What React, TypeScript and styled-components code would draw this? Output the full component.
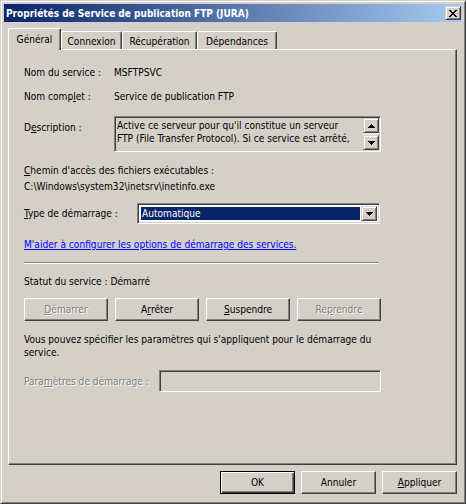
import React from 'react';
import styled, { createGlobalStyle, css } from 'styled-components';

const FACE = '#d4d0c8';
const FONT = `"DejaVu Sans Condensed", "Liberation Sans", sans-serif`;

const Global = createGlobalStyle`
  html, body { margin: 0; padding: 0; background: ${FACE}; }
  body { font-family: ${FONT}; font-size: 10.1px; line-height: 13px; color: #000; }
  * { box-sizing: border-box; }
`;

const Window = styled.div`
  width: 466px;
  height: 504px;
  background: ${FACE};
  border: 1px solid;
  border-color: ${FACE} #404040 #404040 ${FACE};
  box-shadow: inset 1px 1px #fff, inset -1px -1px #808080;
  padding: 3px;
  display: flex;
  flex-direction: column;
`;

const TitleBar = styled.div`
  height: 18px;
  flex: none;
  background: linear-gradient(to right, #0a246a, #a6caf0);
  display: flex;
  align-items: center;
  justify-content: space-between;
  padding: 0 1px 0 2px;
`;

const TitleText = styled.span`
  color: #fff;
  font-weight: bold;
  font-size: 10px;
  white-space: nowrap;
`;

const raised = css`
  background: ${FACE};
  border: 1px solid;
  border-color: ${FACE} #404040 #404040 ${FACE};
  box-shadow: inset 1px 1px #fff, inset -1px -1px #808080;
`;

const sunken = css`
  border: 1px solid;
  border-color: #808080 #fff #fff #808080;
  box-shadow: inset 1px 1px #404040, inset -1px -1px ${FACE};
`;

const CaptionButton = styled.div`
  ${raised};
  width: 16px;
  height: 14px;
  display: flex;
  align-items: center;
  justify-content: center;
`;

const Body = styled.div`
  flex: 1;
  display: flex;
  flex-direction: column;
  padding: 6px 5px 6px 4px;
`;

const TabStrip = styled.div`
  height: 21px;
  display: flex;
  align-items: flex-end;
  position: relative;
  z-index: 2;
`;

const Tab = styled.div<{ $active?: boolean; $w: number }>`
  width: ${(p) => p.$w}px;
  height: ${(p) => (p.$active ? 22 : 18)}px;
  margin-bottom: ${(p) => (p.$active ? -1 : 0)}px;
  background: ${FACE};
  border-top: 1px solid #fff;
  border-left: 1px solid #fff;
  border-right: 1px solid #404040;
  border-radius: 2px 2px 0 0;
  box-shadow: inset -1px 0 #808080;
  display: flex;
  justify-content: center;
  padding-top: ${(p) => (p.$active ? 4 : 3)}px;
  white-space: nowrap;
`;

const Panel = styled.div`
  flex: 1;
  border: 1px solid;
  border-color: #fff #404040 #404040 #fff;
  box-shadow: inset -1px -1px #808080;
  padding: 0 0 0 15px;
  display: flex;
  flex-direction: column;
`;

const Row = styled.div<{ $mt: number; $align?: string }>`
  display: flex;
  align-items: ${(p) => p.$align || 'center'};
  margin-top: ${(p) => p.$mt}px;
  white-space: nowrap;
`;

const Label = styled.div<{ $w: number; $pt?: number; $disabled?: boolean }>`
  width: ${(p) => p.$w}px;
  flex: none;
  padding-top: ${(p) => p.$pt || 0}px;
  ${(p) =>
    p.$disabled &&
    css`
      color: #808080;
      text-shadow: 1px 1px #fff;
    `}
`;

const Line = styled.div<{ $mt: number }>`
  margin-top: ${(p) => p.$mt}px;
  white-space: nowrap;
`;

const DescBox = styled.div`
  ${sunken};
  width: 267px;
  height: 36px;
  display: flex;
  background: ${FACE};
`;

const DescText = styled.div`
  flex: 1;
  padding: 2px 1px 0 2px;
  overflow: hidden;
  white-space: nowrap;
`;

const ScrollBar = styled.div`
  width: 16px;
  display: flex;
  flex-direction: column;
  margin: 1px 1px 1px 0;
`;

const ScrollButton = styled.div`
  ${raised};
  height: 15px;
  display: flex;
  align-items: center;
  justify-content: center;
`;

const ScrollTrack = styled.div`
  flex: 1;
  background-image: repeating-conic-gradient(#fff 0 25%, ${FACE} 0 50%);
  background-size: 2px 2px;
`;

const Combo = styled.div`
  ${sunken};
  width: 243px;
  height: 21px;
  background: #fff;
  display: flex;
  padding: 2px;
`;

const ComboValue = styled.div`
  flex: 1;
  background: #0a246a;
  color: #fff;
  padding-left: 1px;
  display: flex;
  align-items: center;
  margin: 1px;
`;

const ComboButton = styled.div`
  ${raised};
  width: 16px;
  display: flex;
  align-items: center;
  justify-content: center;
`;

const Link = styled.a`
  color: #0000ff;
  text-decoration: underline;
  cursor: pointer;
`;

const Separator = styled.div<{ $mt: number }>`
  width: 354px;
  height: 2px;
  margin-top: ${(p) => p.$mt}px;
  border-top: 1px solid #808080;
  border-bottom: 1px solid #fff;
`;

const ButtonRow = styled.div<{ $mt: number }>`
  width: 357px;
  display: flex;
  justify-content: space-between;
  margin-top: ${(p) => p.$mt}px;
`;

const Button = styled.div<{ $w: number; $disabled?: boolean; $default?: boolean }>`
  width: ${(p) => p.$w}px;
  height: 23px;
  background: ${FACE};
  border: 1px solid;
  border-color: #fff #404040 #404040 #fff;
  box-shadow: inset -1px -1px #808080;
  display: flex;
  align-items: center;
  justify-content: center;
  white-space: nowrap;
  ${(p) =>
    p.$disabled &&
    css`
      color: #808080;
      text-shadow: 1px 1px #fff;
    `}
  ${(p) =>
    p.$default &&
    css`
      border-color: #000;
      box-shadow: inset 1px 1px #fff, inset -1px -1px #404040, inset -2px -2px #808080;
    `}
`;

const Input = styled.div`
  ${sunken};
  width: 222px;
  height: 22px;
  background: ${FACE};
`;

const DialogButtons = styled.div`
  display: flex;
  justify-content: flex-end;
  gap: 6px;
  margin-top: 6px;
`;

const Arrow = ({ dir }: { dir: 'up' | 'down' }) => (
  <svg width="7" height="4" viewBox="0 0 7 4" shapeRendering="crispEdges">
    {dir === 'up' ? (
      <path d="M3 0h1v1h1v1h1v1h1v1H0V3h1V2h1V1h1z" fill="#000" />
    ) : (
      <path d="M0 0h7v1H6v1H5v1H4v1H3V3H2V2H1V1H0z" fill="#000" />
    )}
  </svg>
);

const CloseGlyph = () => (
  <svg width="8" height="7" viewBox="0 0 8 7" shapeRendering="crispEdges">
    <path
      fill="#000"
      d="M0 0h2v1H0z M6 0h2v1H6z M1 1h2v1H1z M5 1h2v1H5z M2 2h4v1H2z M3 3h2v1H3z M2 4h4v1H2z M1 5h2v1H1z M5 5h2v1H5z M0 6h2v1H0z M6 6h2v1H6z"
    />
  </svg>
);

export default function App() {
  return (
    <>
      <Global />
      <Window>
        <TitleBar>
          <TitleText>Propriétés de Service de publication FTP (JURA)</TitleText>
          <CaptionButton>
            <CloseGlyph />
          </CaptionButton>
        </TitleBar>
        <Body>
          <TabStrip>
            <Tab $active $w={53}>Général</Tab>
            <Tab $w={61}>Connexion</Tab>
            <Tab $w={75}>Récupération</Tab>
            <Tab $w={80}>Dépendances</Tab>
          </TabStrip>
          <Panel>
            <Row $mt={16}>
              <Label $w={90}>Nom du service :</Label>
              <span>MSFTPSVC</span>
            </Row>
            <Row $mt={11}>
              <Label $w={90}>
                Nom comp<u>l</u>et :
              </Label>
              <span>Service de publication FTP</span>
            </Row>
            <Row $mt={13} $align="flex-start">
              <Label $w={90} $pt={5}>
                D<u>e</u>scription :
              </Label>
              <DescBox>
                <DescText>
                  Active ce serveur pour qu'il constitue un serveur
                  <br />
                  FTP (File Transfer Protocol). Si ce service est arrêté,
                </DescText>
                <ScrollBar>
                  <ScrollButton>
                    <Arrow dir="up" />
                  </ScrollButton>
                  <ScrollTrack />
                  <ScrollButton>
                    <Arrow dir="down" />
                  </ScrollButton>
                </ScrollBar>
              </DescBox>
            </Row>
            <Line $mt={12}>
              <u>C</u>hemin d'accès des fichiers exécutables :
            </Line>
            <Line $mt={3}>C:\Windows\system32\inetsrv\inetinfo.exe</Line>
            <Row $mt={10}>
              <Label $w={113}>
                <u>T</u>ype de démarrage :
              </Label>
              <Combo>
                <ComboValue>Automatique</ComboValue>
                <ComboButton>
                  <Arrow dir="down" />
                </ComboButton>
              </Combo>
            </Row>
            <Line $mt={14}>
              <Link>M'aider à configurer les options de démarrage des services.</Link>
            </Line>
            <Separator $mt={11} />
            <Line $mt={11}>Statut du service : Démarré</Line>
            <ButtonRow $mt={10}>
              <Button $w={84} $disabled>
                <u>D</u>émarrer
              </Button>
              <Button $w={84}>
                A<u>r</u>rêter
              </Button>
              <Button $w={84}>
                <u>S</u>uspendre
              </Button>
              <Button $w={84} $disabled>
                Re<u>p</u>rendre
              </Button>
            </ButtonRow>
            <Line $mt={12}>
              Vous pouvez spécifier les paramètres qui s'appliquent pour le démarrage du
              <br />
              service.
            </Line>
            <Row $mt={11}>
              <Label $w={135} $disabled>
                Para<u>m</u>ètres de démarrage :
              </Label>
              <Input />
            </Row>
          </Panel>
          <DialogButtons>
            <Button $w={75} $default>
              OK
            </Button>
            <Button $w={75}>Annuler</Button>
            <Button $w={75}>
              <u>A</u>ppliquer
            </Button>
          </DialogButtons>
        </Body>
      </Window>
    </>
  );
}
